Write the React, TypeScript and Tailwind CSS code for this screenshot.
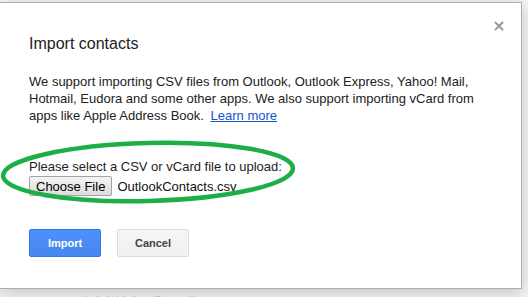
import { X } from 'lucide-react';

function FileField() {
  return (
    <div className="flex items-center">
      <button className="h-[20px] rounded-[2px] border border-[#a3a3a3] bg-gradient-to-b from-[#f4f4f4] to-[#dddddd] px-[6px] text-[13px] leading-none text-black">
        Choose File
      </button>
      <span className="ml-[5px] text-[13px] leading-none text-[#111]">OutlookContacts.csv</span>
    </div>
  );
}

export default function App() {
  return (
    <div
      className="relative h-[297px] w-[528px] overflow-hidden bg-[#f4f4f4]"
      style={{ fontFamily: '"Liberation Sans", Arial, sans-serif' }}
    >
      <div className="relative mt-[2px] h-[287px] w-[522px] border-y border-r border-[#acacac] bg-white shadow-[0_4px_16px_rgba(0,0,0,0.2)]">
        <button className="absolute right-[15px] top-[16px] text-[#999]">
          <X className="h-[14px] w-[14px]" strokeWidth={3.2} />
        </button>

        <div className="pl-[29px] pt-[31px]">
          <h1 className="text-[16px] leading-[20px] text-[#222]">Import contacts</h1>

          <p className="mt-[19px] w-[460px] text-[13px] leading-[17px] text-[#222]">
            We support importing CSV files from Outlook, Outlook Express, Yahoo! Mail, Hotmail, Eudora and some other
            apps. We also support importing vCard from apps like Apple Address Book.{' '}
            <a href="#" className="ml-[3px] text-[#15c] underline">
              Learn more
            </a>
          </p>

          <div className="mt-[34px]">
            <p className="text-[13px] leading-[17px] text-[#222]">Please select a CSV or vCard file to upload:</p>
            <div className="mt-px">
              <FileField />
            </div>
          </div>

          <div className="mt-[33px] flex gap-[16px]">
            <button className="h-[28px] w-[72px] rounded-[2px] border border-[#3079ed] bg-gradient-to-b from-[#4d90fe] to-[#4787ed] text-[11px] font-bold text-white">
              Import
            </button>
            <button className="h-[28px] w-[72px] rounded-[2px] border border-[#dcdcdc] bg-gradient-to-b from-[#f5f5f5] to-[#f1f1f1] text-[11px] font-bold text-[#444]">
              Cancel
            </button>
          </div>
        </div>
      </div>

      <span className="absolute left-[84px] top-[292px] text-[13px] leading-[17px] text-[#bbb]">
        bdelaidolan@gmail.com
      </span>

      <svg className="pointer-events-none absolute left-0 top-0" width="528" height="297">
        <ellipse
          cx="148"
          cy="172"
          rx="145"
          ry="29"
          transform="rotate(-1.5 148 172)"
          fill="none"
          stroke="#1eae48"
          strokeWidth="4.5"
        />
      </svg>
    </div>
  );
}
